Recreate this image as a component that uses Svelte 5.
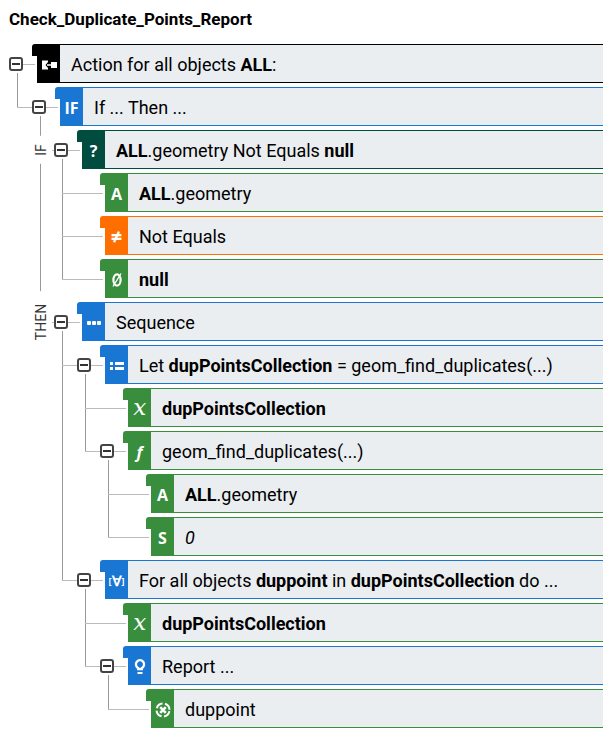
<script>
  const tree = {
    icon: 'link', color: 'black', text: 'Action for all objects **ALL**:',
    children: [
      {
        icon: 'IF', color: 'blue', text: 'If ... Then ...', branches: true,
        children: [
          {
            icon: '?', color: 'teal', text: '**ALL**.geometry Not Equals **null**', label: 'IF',
            children: [
              { icon: 'A', color: 'green', text: '**ALL**.geometry' },
              { icon: '≠', color: 'orange', text: 'Not Equals' },
              { icon: 'null', color: 'green', text: '**null**' },
            ],
          },
          {
            icon: 'dots', color: 'blue', text: 'Sequence', label: 'THEN',
            children: [
              {
                icon: 'list', color: 'blue', text: 'Let **dupPointsCollection** = geom_find_duplicates(...)',
                children: [
                  { icon: 'x', color: 'green', text: '**dupPointsCollection**' },
                  {
                    icon: 'f', color: 'green', text: 'geom_find_duplicates(...)',
                    children: [
                      { icon: 'A', color: 'green', text: '**ALL**.geometry' },
                      { icon: 'S', color: 'green', text: '0', italic: true },
                    ],
                  },
                ],
              },
              {
                icon: 'forall', color: 'blue', text: 'For all objects **duppoint** in **dupPointsCollection** do ...',
                children: [
                  { icon: 'x', color: 'green', text: '**dupPointsCollection**' },
                  {
                    icon: 'bulb', color: 'blue', text: 'Report ...',
                    children: [{ icon: 'target', color: 'green', text: 'duppoint' }],
                  },
                ],
              },
            ],
          },
        ],
      },
    ],
  };

  let closed = $state({});
  const toggle = (key) => (closed[key] = !closed[key]);
</script>

{#snippet glyph(name)}
  {#if name === 'link'}
    <svg viewBox="0 0 16 16" fill="#fff"><path d="M1 3.500h6v1.500L4.500 8 7 11v1.500H1z" /><path d="M6 7.300h4V5h6v6h-6V8.800H6z" /></svg>
  {:else if name === 'dots'}
    <svg viewBox="0 0 16 16" fill="#fff"><rect x="1" y="6" width="4" height="4" rx="1" /><rect x="6" y="6" width="4" height="4" rx="1" /><rect x="11" y="6" width="4" height="4" rx="1" /></svg>
  {:else if name === 'list'}
    <svg viewBox="0 0 16 16" fill="#fff"><path d="M1 4h3v3H1zM1 9h3v3H1zM6 4h9v3H6zM6 9h9v3H6z" /></svg>
  {:else if name === 'bulb'}
    <svg viewBox="0 0 16 16" fill="none" stroke="#fff" stroke-width="2.300"><path d="M6.200 10.200V9A4.100 4.100 0 1 1 9.800 9V10.200Z" /><path d="M5.500 14h5" stroke-width="2" /></svg>
  {:else if name === 'target'}
    <svg viewBox="0 0 16 16" fill="none" stroke="#fff" stroke-width="2"><circle cx="8" cy="8" r="6.500" stroke-dasharray="7.700 2.510" stroke-dashoffset="-1.250" /><path d="M5.200 5.200l5.600 5.600M10.800 5.200l-5.600 5.600" stroke-width="2.600" /></svg>
  {:else if name === 'null'}
    <svg viewBox="0 0 16 16" fill="none" stroke="#fff"><ellipse cx="8" cy="8" rx="3.600" ry="5.600" stroke-width="2.200" /><path d="M12 1.500L4 14.500" stroke-width="1.400" /></svg>
  {:else if name === 'forall'}
    <span class="forall"><small>[</small>∀<small>]</small></span>
  {:else if name === '≠'}
    <span class="big">≠</span>
  {:else if name === 'x'}
    <span class="math">𝑥</span>
  {:else if name === 'f'}
    <span class="func">f</span>
  {:else}
    <span>{name}</span>
  {/if}
{/snippet}

{#snippet node(n, key)}
  <li class:labelled={n.label} class:leaf={!n.children}>
    <div class="row">
      {#if n.label}<span class="branch">{n.label}</span>{/if}
      {#if n.children}
        <button type="button" class="toggle" class:closed={closed[key]} aria-label="Toggle {n.icon}" aria-expanded={!closed[key]} onclick={() => toggle(key)}></button>
      {/if}
      <div class="card {n.color}">
        <span class="icon">{@render glyph(n.icon)}</span>
        <span class="text" class:italic={n.italic}>{#each n.text.split('**') as part, i}{#if i % 2}<b>{part}</b>{:else}{part}{/if}{/each}</span>
      </div>
    </div>
    {#if n.children && !closed[key]}
      <ul class:branches={n.branches}>
        {#each n.children as child, i}{@render node(child, key + '.' + i)}{/each}
      </ul>
    {/if}
  </li>
{/snippet}

<main>
  <h1>Check_Duplicate_Points_Report</h1>
  <ul class="root">{@render node(tree, '0')}</ul>
</main>

<style>
  :global(body) { margin: 0; background: #fff; }
  main { padding: 7px 0 20px 9px; font-family: Roboto, sans-serif; color: #000; overflow: hidden; }
  h1 { margin: 0 0 13px; font-size: 17px; line-height: 24px; font-weight: 700; }
  ul { list-style: none; margin: 0; padding: 0 0 0 23px; }
  .root { padding: 0; }
  .branches { padding-left: 22px; }
  li { position: relative; }
  .row { position: relative; display: flex; align-items: center; height: 39px; padding-bottom: 4px; }

  /* connector lines */
  li::before { content: ''; position: absolute; left: -15px; top: 0; bottom: 0; border-left: 1px solid #999; }
  li:first-child::before { top: -14px; }
  li:last-child::before { bottom: auto; height: 21px; }
  li:first-child:last-child::before { height: 35px; }
  .branches > li::before { left: -14px; }
  .row::before { content: ''; position: absolute; left: -15px; width: 41px; top: 20px; border-top: 1px solid #bbb; }
  .root > li::before { display: none; }
  .root > li > .row::before { left: 0; width: 26px; }
  li.labelled > .row::before { left: -2px; width: 28px; }
  li.labelled:first-child::before { bottom: 0; }
  li.labelled:last-child::before { display: none; }

  .branch {
    position: absolute; left: -22px; top: 20px; width: 18px; padding: 13px 0; box-sizing: border-box;
    transform: translateY(-50%) rotate(180deg); writing-mode: vertical-rl; line-height: 18px;
    font-size: 14px; color: #333; background: #fff; text-align: center;
  }
  .labelled:first-child > .row .branch { padding: 8px 0; }

  .toggle {
    position: relative; flex: none; width: 14px; height: 14px; padding: 0; margin-right: 14px;
    border: 2px solid #444; border-radius: 3px; background: #fff; cursor: pointer;
  }
  .toggle::before { content: ''; position: absolute; left: 1px; right: 1px; top: 4px; height: 2px; background: #333; }
  .toggle.closed::after { content: ''; position: absolute; top: 1px; bottom: 1px; left: 4px; width: 2px; background: #333; }
  .leaf > .row { padding-left: 28px; }

  .card {
    --c: #388e3c; position: relative; flex: 1; min-width: 0; display: flex; height: 39px; box-sizing: border-box;
    border: solid var(--c); border-width: 1px 0; background: #eaeef1;
  }
  .card::before {
    content: ''; position: absolute; left: -5px; top: -1px; width: 8px; height: 12px;
    background: var(--c); border-top-left-radius: 3px;
  }
  .black { --c: #000; }
  .blue { --c: #1976d2; }
  .teal { --c: #004d40; }
  .orange { --c: #ff6f00; }
  .icon {
    position: relative; flex: none; width: 23px; display: flex; align-items: center; justify-content: center; padding-top: 3px;
    box-sizing: border-box; background: var(--c); color: #fff; font: 700 16px/20px "Open Sans", sans-serif;
  }
  .icon svg { flex: none; width: 16px; height: 16px; }
  .math { font: 400 23px/20px "DejaVu Math TeX Gyre", "DejaVu Serif", serif; }
  .func { font-style: italic; }
  .big { font-size: 20px; }
  .forall { display: flex; align-items: center; font-size: 14px; }
  .forall small { font-size: 9px; }
  .text { padding: 2px 0 0 11px; font-size: 18px; line-height: 35px; white-space: nowrap; }
  .italic { font-style: italic; }
</style>
